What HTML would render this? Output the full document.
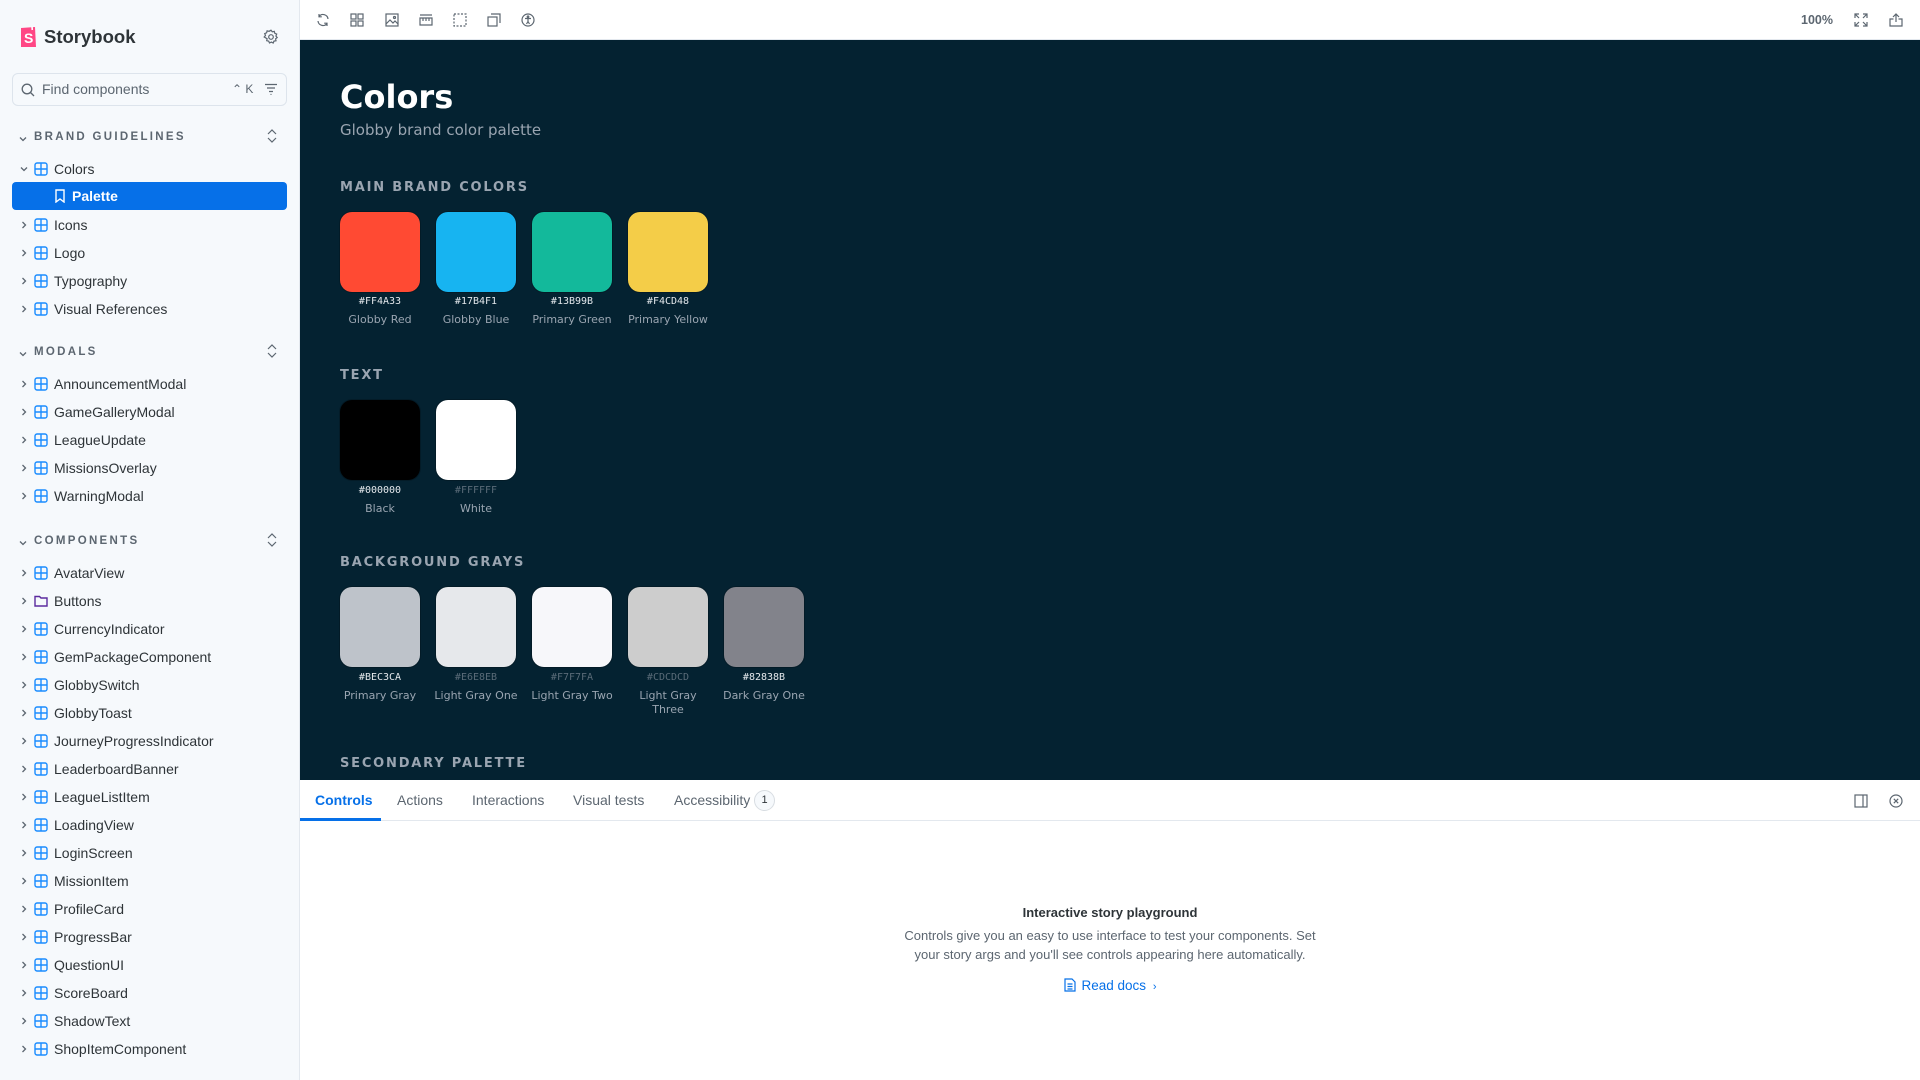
<!DOCTYPE html>
<html><head><meta charset="utf-8">
<style>
*{box-sizing:border-box;margin:0;padding:0}
body{width:1920px;height:1080px;overflow:hidden;font-family:"Liberation Sans",sans-serif;background:#fff;position:relative}
.sb{position:absolute;left:0;top:0;width:300px;height:1080px;background:#f6f9fc;border-right:1px solid #e3e8ee}
.abs{position:absolute}
.row{position:absolute;left:12px;width:275px;height:28px;font-size:14px;color:#2e3438;line-height:28px}
.row .chev{position:absolute;left:7px;top:9px;width:10px;height:10px}
.row .ic{position:absolute;left:22px;top:7px;width:14px;height:14px}
.row .t{position:absolute;left:42px}
.hdr{position:absolute;left:18px;font-size:11.5px;font-weight:bold;letter-spacing:2.3px;color:#5c6670}
.hdr svg{position:absolute;left:0;top:3px}
.hdr span{margin-left:16px}
.tog{position:absolute;left:266px}
.tb{position:absolute;left:300px;top:0;width:1620px;height:40px;background:#fff;border-bottom:1px solid #e3e8ee}
.tb svg{position:absolute;top:13px}
.main{position:absolute;left:300px;top:40px;width:1620px;height:740px;background:#042231;font-family:"DejaVu Sans",sans-serif;overflow:hidden}
.sec{position:absolute;left:40px;font-size:13px;font-weight:bold;letter-spacing:1.8px;color:#9aa5b1}
.sw{position:absolute;width:80px;height:80px;border-radius:12px;box-shadow:0 0 0 1px rgba(0,0,0,.2)}
.hx{position:absolute;width:96px;margin-left:-8px;text-align:center;font-family:"DejaVu Sans Mono",monospace;font-size:10px;color:#e4e8ec}
.nm{position:absolute;width:96px;margin-left:-8px;text-align:center;font-size:11px;color:#9aa5b1;line-height:14px}
.panel{position:absolute;left:300px;top:780px;width:1620px;height:300px;background:#fff}
.tabs{position:absolute;left:0;top:0;width:1620px;height:41px;border-bottom:1px solid #e3e8ee}
.tab{position:absolute;top:12px;font-size:14px;color:#5c6670}
</style></head><body>
<div class="sb">
  <svg class="abs" style="left:20px;top:26px" width="18" height="22" viewBox="0 0 18 22"><path d="M1 2 L15 1 L16 21 L1 21 Z" fill="#ff4785"/><path d="M12 0.5 L12.3 4" stroke="#fff" stroke-width="1.6"/><text x="4" y="17" font-size="14" font-weight="bold" fill="#fff" font-family="Liberation Sans">S</text></svg>
  <div class="abs" style="left:44px;top:26px;font-size:18.5px;font-weight:bold;color:#2e3438">Storybook</div>
  <svg class="abs" style="left:263px;top:29px" width="16" height="16" viewBox="0 0 16 16" fill="none" stroke="#5c6670" stroke-width="1.2"><circle cx="8" cy="8" r="2.3"/><path d="M8 1.2l1.3 1.6 2-.5.5 2 1.9.8-.8 1.9 1.3 1.5-1.6 1.3.4 2-2 .3-.8 1.9-1.8-.9-1.9.9-.8-1.9-2-.4.4-2L1.2 8l1.3-1.5-.8-1.9 1.9-.8.5-2 2 .5z"/></svg>
  <div class="abs" style="left:12px;top:73px;width:275px;height:33px;border:1px solid #dde4ec;border-radius:6px;background:#f6f9fc"></div>
  <svg class="abs" style="left:21px;top:83px" width="14" height="14" viewBox="0 0 14 14" fill="none" stroke="#5c6670" stroke-width="1.3"><circle cx="6" cy="6" r="4.8"/><path d="M9.5 9.5L13 13"/></svg>
  <div class="abs" style="left:42px;top:81px;font-size:14px;color:#5c6670">Find components</div>
  <div class="abs" style="left:232px;top:82px;font-size:12px;color:#5c6670">⌃ K</div>
  <svg class="abs" style="left:264px;top:83px" width="14" height="12" viewBox="0 0 14 12" stroke="#5c6670" stroke-width="1.2"><path d="M1 1.5h12M3 5h8M5 8.5h4M6.5 11.5h1"/></svg>

  <div class="hdr" style="top:131px"><svg width="10" height="10" viewBox="0 0 10 10" fill="none" stroke="#5c6670" stroke-width="1.3"><path d="M2 3.5l3 3 3-3"/></svg><span>BRAND GUIDELINES</span></div>
  <svg class="tog" style="top:128px" width="12" height="16" viewBox="0 0 12 16" fill="none" stroke="#5c6670" stroke-width="1.2"><path d="M2 6l4-4 4 4M2 10l4 4 4-4"/></svg>

  <div class="row" style="top:155px"><svg class="chev" viewBox="0 0 10 10" fill="none" stroke="#5c6670" stroke-width="1.3"><path d="M2 3.5l3 3 3-3"/></svg><svg class="ic" viewBox="0 0 14 14" fill="none" stroke="#1a8cff" stroke-width="1.4"><rect x="1" y="1" width="12" height="12" rx="2"/><path d="M7 1v12M1 7h12"/></svg><span class="t">Colors</span></div>
  <div class="row" style="top:182px;background:#0670e8;border-radius:4px;color:#fff;font-weight:bold"><svg class="ic" style="left:41px" viewBox="0 0 14 14" fill="none" stroke="#fff" stroke-width="1.4"><path d="M3 1h8v12l-4-3-4 3z"/></svg><span class="t" style="left:60px">Palette</span></div>
  <div class="row" style="top:211px"><svg class="chev" viewBox="0 0 10 10" fill="none" stroke="#5c6670" stroke-width="1.3"><path d="M3.5 2l3 3-3 3"/></svg><svg class="ic" viewBox="0 0 14 14" fill="none" stroke="#1a8cff" stroke-width="1.4"><rect x="1" y="1" width="12" height="12" rx="2"/><path d="M7 1v12M1 7h12"/></svg><span class="t">Icons</span></div>
  <div class="row" style="top:239px"><svg class="chev" viewBox="0 0 10 10" fill="none" stroke="#5c6670" stroke-width="1.3"><path d="M3.5 2l3 3-3 3"/></svg><svg class="ic" viewBox="0 0 14 14" fill="none" stroke="#1a8cff" stroke-width="1.4"><rect x="1" y="1" width="12" height="12" rx="2"/><path d="M7 1v12M1 7h12"/></svg><span class="t">Logo</span></div>
  <div class="row" style="top:267px"><svg class="chev" viewBox="0 0 10 10" fill="none" stroke="#5c6670" stroke-width="1.3"><path d="M3.5 2l3 3-3 3"/></svg><svg class="ic" viewBox="0 0 14 14" fill="none" stroke="#1a8cff" stroke-width="1.4"><rect x="1" y="1" width="12" height="12" rx="2"/><path d="M7 1v12M1 7h12"/></svg><span class="t">Typography</span></div>
  <div class="row" style="top:295px"><svg class="chev" viewBox="0 0 10 10" fill="none" stroke="#5c6670" stroke-width="1.3"><path d="M3.5 2l3 3-3 3"/></svg><svg class="ic" viewBox="0 0 14 14" fill="none" stroke="#1a8cff" stroke-width="1.4"><rect x="1" y="1" width="12" height="12" rx="2"/><path d="M7 1v12M1 7h12"/></svg><span class="t">Visual References</span></div>

  <div class="hdr" style="top:346px"><svg width="10" height="10" viewBox="0 0 10 10" fill="none" stroke="#5c6670" stroke-width="1.3"><path d="M2 3.5l3 3 3-3"/></svg><span>MODALS</span></div>
  <svg class="tog" style="top:343px" width="12" height="16" viewBox="0 0 12 16" fill="none" stroke="#5c6670" stroke-width="1.2"><path d="M2 6l4-4 4 4M2 10l4 4 4-4"/></svg>
  <div class="row" style="top:370px"><svg class="chev" viewBox="0 0 10 10" fill="none" stroke="#5c6670" stroke-width="1.3"><path d="M3.5 2l3 3-3 3"/></svg><svg class="ic" viewBox="0 0 14 14" fill="none" stroke="#1a8cff" stroke-width="1.4"><rect x="1" y="1" width="12" height="12" rx="2"/><path d="M7 1v12M1 7h12"/></svg><span class="t">AnnouncementModal</span></div>
  <div class="row" style="top:398px"><svg class="chev" viewBox="0 0 10 10" fill="none" stroke="#5c6670" stroke-width="1.3"><path d="M3.5 2l3 3-3 3"/></svg><svg class="ic" viewBox="0 0 14 14" fill="none" stroke="#1a8cff" stroke-width="1.4"><rect x="1" y="1" width="12" height="12" rx="2"/><path d="M7 1v12M1 7h12"/></svg><span class="t">GameGalleryModal</span></div>
  <div class="row" style="top:426px"><svg class="chev" viewBox="0 0 10 10" fill="none" stroke="#5c6670" stroke-width="1.3"><path d="M3.5 2l3 3-3 3"/></svg><svg class="ic" viewBox="0 0 14 14" fill="none" stroke="#1a8cff" stroke-width="1.4"><rect x="1" y="1" width="12" height="12" rx="2"/><path d="M7 1v12M1 7h12"/></svg><span class="t">LeagueUpdate</span></div>
  <div class="row" style="top:454px"><svg class="chev" viewBox="0 0 10 10" fill="none" stroke="#5c6670" stroke-width="1.3"><path d="M3.5 2l3 3-3 3"/></svg><svg class="ic" viewBox="0 0 14 14" fill="none" stroke="#1a8cff" stroke-width="1.4"><rect x="1" y="1" width="12" height="12" rx="2"/><path d="M7 1v12M1 7h12"/></svg><span class="t">MissionsOverlay</span></div>
  <div class="row" style="top:482px"><svg class="chev" viewBox="0 0 10 10" fill="none" stroke="#5c6670" stroke-width="1.3"><path d="M3.5 2l3 3-3 3"/></svg><svg class="ic" viewBox="0 0 14 14" fill="none" stroke="#1a8cff" stroke-width="1.4"><rect x="1" y="1" width="12" height="12" rx="2"/><path d="M7 1v12M1 7h12"/></svg><span class="t">WarningModal</span></div>

  <div class="hdr" style="top:535px"><svg width="10" height="10" viewBox="0 0 10 10" fill="none" stroke="#5c6670" stroke-width="1.3"><path d="M2 3.5l3 3 3-3"/></svg><span>COMPONENTS</span></div>
  <svg class="tog" style="top:532px" width="12" height="16" viewBox="0 0 12 16" fill="none" stroke="#5c6670" stroke-width="1.2"><path d="M2 6l4-4 4 4M2 10l4 4 4-4"/></svg>
  <div class="row" style="top:559px"><svg class="chev" viewBox="0 0 10 10" fill="none" stroke="#5c6670" stroke-width="1.3"><path d="M3.5 2l3 3-3 3"/></svg><svg class="ic" viewBox="0 0 14 14" fill="none" stroke="#1a8cff" stroke-width="1.4"><rect x="1" y="1" width="12" height="12" rx="2"/><path d="M7 1v12M1 7h12"/></svg><span class="t">AvatarView</span></div>
  <div class="row" style="top:587px"><svg class="chev" viewBox="0 0 10 10" fill="none" stroke="#5c6670" stroke-width="1.3"><path d="M3.5 2l3 3-3 3"/></svg><svg class="ic" viewBox="0 0 14 14" fill="none" stroke="#5b2a9e" stroke-width="1.4"><path d="M1 2.5h4.5l1.5 1.5h6v8H1z"/></svg><span class="t">Buttons</span></div>
  <div class="row" style="top:615px"><svg class="chev" viewBox="0 0 10 10" fill="none" stroke="#5c6670" stroke-width="1.3"><path d="M3.5 2l3 3-3 3"/></svg><svg class="ic" viewBox="0 0 14 14" fill="none" stroke="#1a8cff" stroke-width="1.4"><rect x="1" y="1" width="12" height="12" rx="2"/><path d="M7 1v12M1 7h12"/></svg><span class="t">CurrencyIndicator</span></div>
  <div class="row" style="top:643px"><svg class="chev" viewBox="0 0 10 10" fill="none" stroke="#5c6670" stroke-width="1.3"><path d="M3.5 2l3 3-3 3"/></svg><svg class="ic" viewBox="0 0 14 14" fill="none" stroke="#1a8cff" stroke-width="1.4"><rect x="1" y="1" width="12" height="12" rx="2"/><path d="M7 1v12M1 7h12"/></svg><span class="t">GemPackageComponent</span></div>
  <div class="row" style="top:671px"><svg class="chev" viewBox="0 0 10 10" fill="none" stroke="#5c6670" stroke-width="1.3"><path d="M3.5 2l3 3-3 3"/></svg><svg class="ic" viewBox="0 0 14 14" fill="none" stroke="#1a8cff" stroke-width="1.4"><rect x="1" y="1" width="12" height="12" rx="2"/><path d="M7 1v12M1 7h12"/></svg><span class="t">GlobbySwitch</span></div>
  <div class="row" style="top:699px"><svg class="chev" viewBox="0 0 10 10" fill="none" stroke="#5c6670" stroke-width="1.3"><path d="M3.5 2l3 3-3 3"/></svg><svg class="ic" viewBox="0 0 14 14" fill="none" stroke="#1a8cff" stroke-width="1.4"><rect x="1" y="1" width="12" height="12" rx="2"/><path d="M7 1v12M1 7h12"/></svg><span class="t">GlobbyToast</span></div>
  <div class="row" style="top:727px"><svg class="chev" viewBox="0 0 10 10" fill="none" stroke="#5c6670" stroke-width="1.3"><path d="M3.5 2l3 3-3 3"/></svg><svg class="ic" viewBox="0 0 14 14" fill="none" stroke="#1a8cff" stroke-width="1.4"><rect x="1" y="1" width="12" height="12" rx="2"/><path d="M7 1v12M1 7h12"/></svg><span class="t">JourneyProgressIndicator</span></div>
  <div class="row" style="top:755px"><svg class="chev" viewBox="0 0 10 10" fill="none" stroke="#5c6670" stroke-width="1.3"><path d="M3.5 2l3 3-3 3"/></svg><svg class="ic" viewBox="0 0 14 14" fill="none" stroke="#1a8cff" stroke-width="1.4"><rect x="1" y="1" width="12" height="12" rx="2"/><path d="M7 1v12M1 7h12"/></svg><span class="t">LeaderboardBanner</span></div>
  <div class="row" style="top:783px"><svg class="chev" viewBox="0 0 10 10" fill="none" stroke="#5c6670" stroke-width="1.3"><path d="M3.5 2l3 3-3 3"/></svg><svg class="ic" viewBox="0 0 14 14" fill="none" stroke="#1a8cff" stroke-width="1.4"><rect x="1" y="1" width="12" height="12" rx="2"/><path d="M7 1v12M1 7h12"/></svg><span class="t">LeagueListItem</span></div>
  <div class="row" style="top:811px"><svg class="chev" viewBox="0 0 10 10" fill="none" stroke="#5c6670" stroke-width="1.3"><path d="M3.5 2l3 3-3 3"/></svg><svg class="ic" viewBox="0 0 14 14" fill="none" stroke="#1a8cff" stroke-width="1.4"><rect x="1" y="1" width="12" height="12" rx="2"/><path d="M7 1v12M1 7h12"/></svg><span class="t">LoadingView</span></div>
  <div class="row" style="top:839px"><svg class="chev" viewBox="0 0 10 10" fill="none" stroke="#5c6670" stroke-width="1.3"><path d="M3.5 2l3 3-3 3"/></svg><svg class="ic" viewBox="0 0 14 14" fill="none" stroke="#1a8cff" stroke-width="1.4"><rect x="1" y="1" width="12" height="12" rx="2"/><path d="M7 1v12M1 7h12"/></svg><span class="t">LoginScreen</span></div>
  <div class="row" style="top:867px"><svg class="chev" viewBox="0 0 10 10" fill="none" stroke="#5c6670" stroke-width="1.3"><path d="M3.5 2l3 3-3 3"/></svg><svg class="ic" viewBox="0 0 14 14" fill="none" stroke="#1a8cff" stroke-width="1.4"><rect x="1" y="1" width="12" height="12" rx="2"/><path d="M7 1v12M1 7h12"/></svg><span class="t">MissionItem</span></div>
  <div class="row" style="top:895px"><svg class="chev" viewBox="0 0 10 10" fill="none" stroke="#5c6670" stroke-width="1.3"><path d="M3.5 2l3 3-3 3"/></svg><svg class="ic" viewBox="0 0 14 14" fill="none" stroke="#1a8cff" stroke-width="1.4"><rect x="1" y="1" width="12" height="12" rx="2"/><path d="M7 1v12M1 7h12"/></svg><span class="t">ProfileCard</span></div>
  <div class="row" style="top:923px"><svg class="chev" viewBox="0 0 10 10" fill="none" stroke="#5c6670" stroke-width="1.3"><path d="M3.5 2l3 3-3 3"/></svg><svg class="ic" viewBox="0 0 14 14" fill="none" stroke="#1a8cff" stroke-width="1.4"><rect x="1" y="1" width="12" height="12" rx="2"/><path d="M7 1v12M1 7h12"/></svg><span class="t">ProgressBar</span></div>
  <div class="row" style="top:951px"><svg class="chev" viewBox="0 0 10 10" fill="none" stroke="#5c6670" stroke-width="1.3"><path d="M3.5 2l3 3-3 3"/></svg><svg class="ic" viewBox="0 0 14 14" fill="none" stroke="#1a8cff" stroke-width="1.4"><rect x="1" y="1" width="12" height="12" rx="2"/><path d="M7 1v12M1 7h12"/></svg><span class="t">QuestionUI</span></div>
  <div class="row" style="top:979px"><svg class="chev" viewBox="0 0 10 10" fill="none" stroke="#5c6670" stroke-width="1.3"><path d="M3.5 2l3 3-3 3"/></svg><svg class="ic" viewBox="0 0 14 14" fill="none" stroke="#1a8cff" stroke-width="1.4"><rect x="1" y="1" width="12" height="12" rx="2"/><path d="M7 1v12M1 7h12"/></svg><span class="t">ScoreBoard</span></div>
  <div class="row" style="top:1007px"><svg class="chev" viewBox="0 0 10 10" fill="none" stroke="#5c6670" stroke-width="1.3"><path d="M3.5 2l3 3-3 3"/></svg><svg class="ic" viewBox="0 0 14 14" fill="none" stroke="#1a8cff" stroke-width="1.4"><rect x="1" y="1" width="12" height="12" rx="2"/><path d="M7 1v12M1 7h12"/></svg><span class="t">ShadowText</span></div>
  <div class="row" style="top:1035px"><svg class="chev" viewBox="0 0 10 10" fill="none" stroke="#5c6670" stroke-width="1.3"><path d="M3.5 2l3 3-3 3"/></svg><svg class="ic" viewBox="0 0 14 14" fill="none" stroke="#1a8cff" stroke-width="1.4"><rect x="1" y="1" width="12" height="12" rx="2"/><path d="M7 1v12M1 7h12"/></svg><span class="t">ShopItemComponent</span></div>
</div>

<div class="tb">
  <svg style="left:16px" width="14" height="14" viewBox="0 0 14 14" fill="none" stroke="#5c6670" stroke-width="1.2"><path d="M12 6A5 5 0 0 0 3 3.5M2 8a5 5 0 0 0 9 2.5M3 1v2.8h2.8M11 13v-2.8H8.2"/></svg>
  <svg style="left:50px" width="14" height="14" viewBox="0 0 14 14" fill="none" stroke="#5c6670" stroke-width="1.2"><rect x="1" y="1" width="5" height="5"/><rect x="8" y="1" width="5" height="5"/><rect x="1" y="8" width="5" height="5"/><rect x="8" y="8" width="5" height="5"/></svg>
  <svg style="left:85px" width="14" height="14" viewBox="0 0 14 14" fill="none" stroke="#5c6670" stroke-width="1.2"><rect x="1" y="1" width="12" height="12"/><path d="M1 11l4-4 3 3 2-2 3 3"/><circle cx="9.5" cy="4.5" r="1"/></svg>
  <svg style="left:119px" width="14" height="14" viewBox="0 0 14 14" fill="none" stroke="#5c6670" stroke-width="1.2"><path d="M1 2h12M1 5h12v7H1zM4 5v3M7 5v3M10 5v3"/></svg>
  <svg style="left:153px" width="14" height="14" viewBox="0 0 14 14" fill="none" stroke="#5c6670" stroke-width="1.2" stroke-dasharray="2 1.5"><rect x="1" y="1" width="12" height="12"/></svg>
  <svg style="left:187px" width="14" height="14" viewBox="0 0 14 14" fill="none" stroke="#5c6670" stroke-width="1.2"><rect x="1" y="4" width="9" height="9"/><path d="M4 1h9v9"/></svg>
  <svg style="left:221px" width="14" height="14" viewBox="0 0 14 14" fill="none" stroke="#5c6670" stroke-width="1.2"><circle cx="7" cy="7" r="6"/><circle cx="7" cy="3.8" r=".8"/><path d="M4 5.5h6M7 5.5v3M5.5 11l1.5-2.5 1.5 2.5"/></svg>
  <div style="position:absolute;left:1501px;top:13px;font-size:12.5px;font-weight:bold;color:#5c6670">100%</div>
  <svg style="left:1554px" width="14" height="14" viewBox="0 0 14 14" fill="none" stroke="#5c6670" stroke-width="1.2"><path d="M1 5V1h4M9 1h4v4M13 9v4H9M5 13H1V9M1 1l4 4M13 1L9 5M13 13L9 9M1 13l4-4"/></svg>
  <svg style="left:1589px" width="14" height="14" viewBox="0 0 14 14" fill="none" stroke="#5c6670" stroke-width="1.2"><path d="M7 1v8M4 4l3-3 3 3M4.5 6H1v7h12V6H9.5"/></svg>
</div>

<div class="main">
  <div class="abs" style="left:40px;top:38px;font-size:32px;font-weight:bold;color:#fff">Colors</div>
  <div class="abs" style="left:40px;top:81px;font-size:15px;color:#9aa5b1">Globby brand color palette</div>

  <div class="sec" style="top:140px">MAIN BRAND COLORS</div>
  <div class="sw" style="left:40px;top:172px;background:#FF4A33"></div><div class="hx" style="left:40px;top:256px">#FF4A33</div><div class="nm" style="left:40px;top:273px">Globby Red</div>
  <div class="sw" style="left:136px;top:172px;background:#17B4F1"></div><div class="hx" style="left:136px;top:256px">#17B4F1</div><div class="nm" style="left:136px;top:273px">Globby Blue</div>
  <div class="sw" style="left:232px;top:172px;background:#13B99B"></div><div class="hx" style="left:232px;top:256px">#13B99B</div><div class="nm" style="left:232px;top:273px">Primary Green</div>
  <div class="sw" style="left:328px;top:172px;background:#F4CD48"></div><div class="hx" style="left:328px;top:256px">#F4CD48</div><div class="nm" style="left:328px;top:273px">Primary Yellow</div>

  <div class="sec" style="top:328px">TEXT</div>
  <div class="sw" style="left:40px;top:360px;background:#000"></div><div class="hx" style="left:40px;top:445px">#000000</div><div class="nm" style="left:40px;top:462px">Black</div>
  <div class="sw" style="left:136px;top:360px;background:#fff"></div><div class="hx" style="left:136px;top:445px;color:#5a6b78">#FFFFFF</div><div class="nm" style="left:136px;top:462px">White</div>

  <div class="sec" style="top:515px">BACKGROUND GRAYS</div>
  <div class="sw" style="left:40px;top:547px;background:#BEC3CA"></div><div class="hx" style="left:40px;top:632px">#BEC3CA</div><div class="nm" style="left:40px;top:649px">Primary Gray</div>
  <div class="sw" style="left:136px;top:547px;background:#E6E8EB"></div><div class="hx" style="left:136px;top:632px;color:#5a6b78">#E6E8EB</div><div class="nm" style="left:136px;top:649px">Light Gray One</div>
  <div class="sw" style="left:232px;top:547px;background:#F7F7FA"></div><div class="hx" style="left:232px;top:632px;color:#5a6b78">#F7F7FA</div><div class="nm" style="left:232px;top:649px">Light Gray Two</div>
  <div class="sw" style="left:328px;top:547px;background:#CDCDCD"></div><div class="hx" style="left:328px;top:632px;color:#5a6b78">#CDCDCD</div><div class="nm" style="left:328px;top:649px">Light Gray<br>Three</div>
  <div class="sw" style="left:424px;top:547px;background:#82838B"></div><div class="hx" style="left:424px;top:632px">#82838B</div><div class="nm" style="left:424px;top:649px">Dark Gray One</div>

  <div class="sec" style="top:716px">SECONDARY PALETTE</div>
</div>

<div class="panel">
  <div class="tabs">
    <div class="tab" style="left:15px;color:#0670e8;font-weight:bold">Controls</div>
    <div style="position:absolute;left:0;top:38px;width:81px;height:3px;background:#0670e8"></div>
    <div class="tab" style="left:97px">Actions</div>
    <div class="tab" style="left:172px">Interactions</div>
    <div class="tab" style="left:273px">Visual tests</div>
    <div class="tab" style="left:374px">Accessibility</div>
    <div style="position:absolute;left:454px;top:10px;width:21px;height:21px;border-radius:50%;border:1px solid #d8dde2;background:#f6f9fc;font-size:11px;text-align:center;line-height:19px;color:#2e3438">1</div>
    <svg style="position:absolute;left:1554px;top:14px" width="14" height="14" viewBox="0 0 14 14" fill="none" stroke="#5c6670" stroke-width="1.2"><rect x="1" y="1" width="12" height="12"/><path d="M9 1v12"/></svg>
    <svg style="position:absolute;left:1589px;top:14px" width="14" height="14" viewBox="0 0 14 14" fill="none" stroke="#5c6670" stroke-width="1.2"><circle cx="7" cy="7" r="6"/><path d="M4.8 4.8l4.4 4.4M9.2 4.8L4.8 9.2"/></svg>
  </div>
  <div style="position:absolute;left:0;top:125px;width:1620px;text-align:center;font-size:13px;font-weight:bold;color:#2e3438">Interactive story playground</div>
  <div style="position:absolute;left:0;top:146px;width:1620px;text-align:center;font-size:13px;color:#5c6670;line-height:19px">Controls give you an easy to use interface to test your components. Set<br>your story args and you'll see controls appearing here automatically.</div>
  <div style="position:absolute;left:0;top:198px;width:1620px;text-align:center;font-size:13.5px;color:#0670e8">
    <svg style="vertical-align:-2px;margin-right:6px" width="12" height="14" viewBox="0 0 12 14" fill="none" stroke="#0670e8" stroke-width="1.2"><path d="M1 1h7l3 3v9H1zM3.5 6h5M3.5 8.5h5M3.5 11h5"/></svg>Read docs <span style="font-size:11px;margin-left:3px">›</span></div>
</div>
</body></html>
